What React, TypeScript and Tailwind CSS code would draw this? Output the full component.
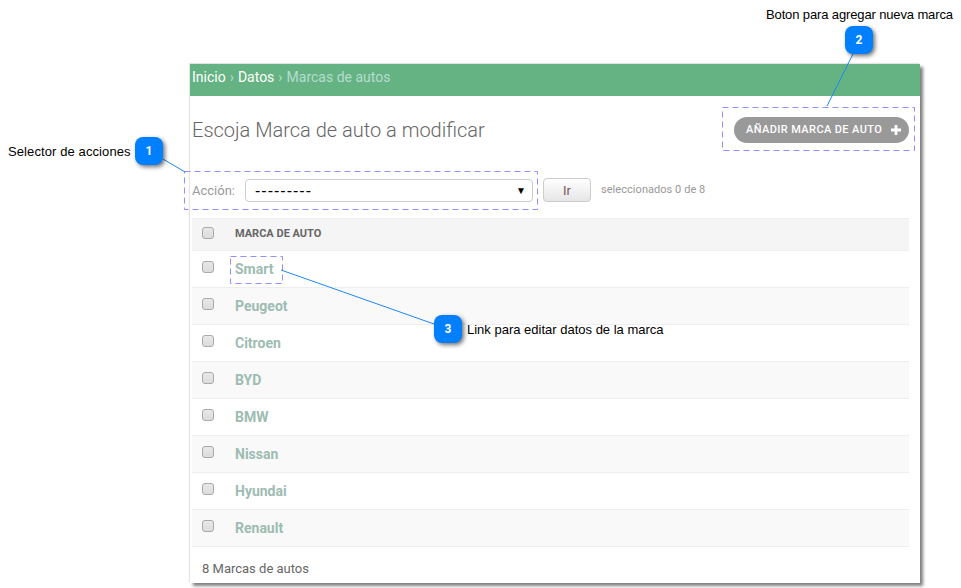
const marcas = ['Smart', 'Peugeot', 'Citroen', 'BYD', 'BMW', 'Nissan', 'Hyundai', 'Renault'];

const Check = () => (
  <span className="block w-3 h-3 -mt-1 rounded-[3px] border border-[#a9a9a9] bg-gradient-to-b from-[#e8e8e8] to-[#dcdcdc]" />
);

const Bubble = ({ n, className }: { n: number; className: string }) => (
  <div
    className={`absolute w-7 h-7 rounded-lg bg-[#007fff] text-white text-xs font-bold flex items-center justify-center shadow-[2px_2px_4px_rgba(0,0,0,0.55)] ${className}`}
  >
    {n}
  </div>
);

const Overlay = () => (
  <svg className="absolute left-0 top-0" width="961" height="588" fill="none">
    <g stroke="#8f8fff" strokeDasharray="6 4">
      <rect x="184.5" y="171.5" width="353" height="38" />
      <rect x="722.5" y="107.5" width="192" height="43" />
      <rect x="230.5" y="256.5" width="52" height="27" />
    </g>
    <g stroke="#1e88f5">
      <line x1="163" y1="159" x2="185" y2="172" />
      <line x1="853" y1="54" x2="827" y2="106" />
      <line x1="281" y1="270" x2="434" y2="324" />
    </g>
  </svg>
);

export default function App() {
  return (
    <div className="relative w-[961px] h-[588px] overflow-hidden bg-white font-['Roboto',sans-serif]">
      <div className="ml-[190px] pt-[64px]">
        <div className="w-[730px] h-[519px] bg-white shadow-[3px_3px_3px_rgba(0,0,0,0.5),-1px_-1px_1px_rgba(0,0,0,0.1)]">
          <div className="h-8 bg-[#65b383] pl-0.5 pb-1.5 flex items-center text-sm text-[#b5dcd0]">
            <span className="text-white">Inicio</span>
            <span className="mx-1">›</span>
            <span className="text-white">Datos</span>
            <span className="mx-1">›</span>
            <span>Marcas de autos</span>
          </div>

          <div className="flex items-center justify-between pl-0.5 pr-[11px] h-[68px]">
            <h1 className="text-xl font-light text-[#666]">Escoja Marca de auto a modificar</h1>
            <div className="h-[26px] w-[175px] mt-[-1px] pt-px pl-3 rounded-full bg-[#999] text-white text-[11px] font-medium tracking-[0.4px] flex items-center gap-[9px]">
              AÑADIR MARCA DE AUTO
              <svg width="10" height="10" viewBox="0 0 10 10" fill="white">
                <path d="M3.6 0h2.8v3.6H10v2.8H6.4V10H3.6V6.4H0V3.6h3.6z" />
              </svg>
            </div>
          </div>

          <div className="flex items-center h-[24px] pl-0.5 mt-[14px] text-xs text-[#999]">
            <span className="w-[53px] mt-px text-[13px]">Acción:</span>
            <div className="w-[288px] h-[23px] mt-px rounded border border-[#ccc] flex items-center justify-between pl-[9px] pr-[6px] text-black">
              <span className="font-['Liberation_Sans',sans-serif] text-base tracking-[1px]">---------</span>
              <span className="text-[10px]">▼</span>
            </div>
            <div className="ml-2.5 w-12 h-6 pt-px rounded border border-[#ccc] bg-gradient-to-b from-white to-[#e6e6e6] text-[#735a5a] text-[13px] flex items-center justify-center">
              Ir
            </div>
            <span className="ml-2.5 mt-px text-[11px] tracking-[0.05px]">seleccionados 0 de 8</span>
          </div>

          <div className="mt-4 ml-0.5 w-[717px]">
            <div className="h-[33px] flex items-center bg-[#f5f5f5] border-t border-b border-[#eee] pl-2.5">
              <Check />
              <span className="ml-[21px] text-[11px] font-bold text-[#666]">MARCA DE AUTO</span>
            </div>
            {marcas.map((m, i) => (
              <div
                key={m}
                className={`h-[37px] flex items-center border-b border-[#eee] pl-2.5 ${i % 2 ? 'bg-[#f9f9f9]' : 'bg-white'}`}
              >
                <Check />
                <span className="ml-[21px] text-sm font-bold text-[#9dbcb2]">{m}</span>
              </div>
            ))}
          </div>

          <div className="pl-3 pt-3 text-[13px] text-[#666]">8 Marcas de autos</div>
        </div>
      </div>

      <Overlay />
      <Bubble n={1} className="left-[135px] top-[137px]" />
      <Bubble n={2} className="left-[845px] top-[26px]" />
      <Bubble n={3} className="left-[434px] top-[315px]" />

      <div className="absolute left-[8px] top-[142px] text-[13px] tracking-[0.1px] text-black font-['Liberation_Sans',sans-serif]">Selector de acciones</div>
      <div className="absolute left-[766px] top-[5px] text-[13px] tracking-[-0.13px] text-black font-['Liberation_Sans',sans-serif]">Boton para agregar nueva marca</div>
      <div className="absolute left-[467px] top-[320px] text-[13px] text-black font-['Liberation_Sans',sans-serif]">Link para editar datos de la marca</div>
    </div>
  );
}
